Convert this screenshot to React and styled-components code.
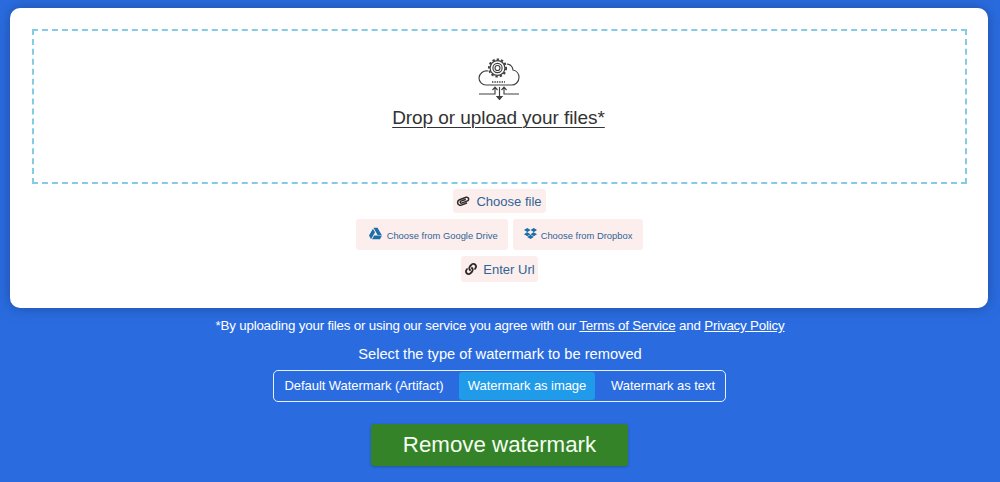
import styled, { createGlobalStyle } from "styled-components";
import { FaLink, FaPaperclip, FaGoogleDrive, FaDropbox } from "react-icons/fa";

const Global = createGlobalStyle`
  html, body {
    margin: 0;
    padding: 0;
    height: 482px;
    overflow: hidden;
    background: #2a6fe0;
    font-family: "Liberation Sans", Arial, sans-serif;
  }
`;

const Page = styled.div`
  width: 1000px;
  height: 482px;
  box-sizing: border-box;
  padding-top: 8px;
  display: flex;
  flex-direction: column;
  align-items: center;
  background: #2a6ce0;
`;

const Card = styled.div`
  box-sizing: border-box;
  width: 978px;
  height: 300px;
  margin-right: 2px;
  padding: 21px 21px 0 22px;
  background: #fff;
  border-radius: 10px;
  box-shadow: 0 0 14px rgba(20, 50, 110, 0.5);
  display: flex;
  flex-direction: column;
  align-items: center;
`;

const Dropzone = styled.div`
  box-sizing: border-box;
  width: 935px;
  height: 155px;
  flex: none;
  padding: 27px 2px 0 0;
  border: 2px dashed #86cbe6;
  display: flex;
  flex-direction: column;
  align-items: center;
  color: #333;
`;

const DropLabel = styled.span`
  margin-top: 6px;
  font-size: 19px;
  line-height: 24px;
  letter-spacing: -0.07px;
  color: #333;
  text-decoration: underline;
  text-underline-offset: 3px;
  text-decoration-thickness: 1px;
`;

const ButtonRow = styled.div`
  display: flex;
  justify-content: center;
  gap: 5px;
  margin-top: ${(p) => p.$top}px;
`;

const SourceButton = styled.div`
  height: ${(p) => p.$height}px;
  padding: ${(p) => (p.$small ? 2 : 0)}px ${(p) => p.$right}px 0 ${(p) => p.$left}px;
  box-sizing: border-box;
  display: flex;
  align-items: center;
  gap: ${(p) => p.$gap}px;
  background: #fdeeee;
  border-radius: 3px;
  color: #2f6494;
  font-size: ${(p) => (p.$small ? 9.4 : 13)}px;
  white-space: nowrap;
  svg {
    flex: none;
  }
`;

const DarkIcon = styled.span`
  display: flex;
  color: #2f2a2a;
  font-size: 12px;
  transform: rotate(${(p) => p.$turn || 0}deg);
`;

const BrandIcon = styled.span`
  display: flex;
  color: #1c6ea8;
  font-size: 13px;
  margin-top: -5px;
`;

const Terms = styled.p`
  margin: 9px 0 0;
  font-size: 13.33px;
  line-height: 18px;
  letter-spacing: -0.19px;
  color: #fff;
  a {
    color: #fff;
    text-decoration: underline;
  }
`;

const SelectLabel = styled.p`
  margin: 10px 0 0;
  font-size: 14.67px;
  line-height: 18px;
  color: #fff;
`;

const Segments = styled.div`
  box-sizing: border-box;
  width: 453px;
  height: 32px;
  margin: 7px 1px 0 0;
  padding: 1px 0;
  display: flex;
  align-items: stretch;
  border: 1px solid #e6f0ff;
  border-radius: 5px;
`;

const Segment = styled.div`
  box-sizing: border-box;
  display: flex;
  align-items: center;
  justify-content: center;
  width: ${(p) => p.$width}px;
  padding: ${(p) => p.$pad || "0 0 2px"};
  font-size: 13px;
  letter-spacing: -0.06px;
  color: #fff;
  white-space: nowrap;
  border-radius: 3px;
  background: ${(p) => (p.$active ? "#1f9bea" : "transparent")};
`;

const Submit = styled.button`
  width: 257px;
  height: 42px;
  margin: 22px 1px 0 0;
  border: 0;
  padding: 0;
  border-radius: 3px;
  background: #358329;
  color: #f4fff0;
  font-family: inherit;
  font-size: 22.3px;
  box-shadow: 0 1px 3px rgba(20, 50, 30, 0.35);
`;

function CloudIcon() {
  return (
    <svg width="42" height="42" viewBox="0 0 42 42" fill="none" stroke="#404040" strokeWidth="1.15">
      <path d="M10 13A7.500 7.500 0 0 0 1 20a7 7 0 0 0 7 7h25a7.500 7.500 0 0 0 8-7.500 7.500 7.500 0 0 0-6-7.500 7 7 0 0 0-6-6" />
      <circle cx="19.500" cy="10" r="8.600" strokeWidth="1.900" strokeDasharray="2.400 1.980" />
      <circle cx="19.500" cy="10" r="7.400" />
      <circle cx="19.500" cy="10" r="4.600" />
      <circle cx="19.500" cy="10" r="2.500" />
      <path d="M14 24h13" strokeWidth="1.300" strokeDasharray="1.400 1" />
      <path d="M1 36h16V29.500M14.500 32l2.500-2.800 2.500 2.800M41 36H26V29.500M23.500 32l2.500-2.800 2.500 2.800M21.500 29v12" />
      <path d="M19 38.500h5l-2.500 3z" fill="#404040" />
    </svg>
  );
}

export default function App() {
  return (
    <Page>
      <Global />
      <Card>
        <Dropzone>
          <CloudIcon />
          <DropLabel>Drop or upload your files*</DropLabel>
        </Dropzone>
        <ButtonRow $top={5}>
          <SourceButton $height={24} $left={4} $right={4} $gap={7}>
            <DarkIcon $turn={25}><FaPaperclip /></DarkIcon>
            Choose file
          </SourceButton>
        </ButtonRow>
        <ButtonRow $top={6}>
          <SourceButton $small $height={31} $left={13} $right={10} $gap={5}>
            <BrandIcon><FaGoogleDrive /></BrandIcon>
            Choose from Google Drive
          </SourceButton>
          <SourceButton $small $height={31} $left={11} $right={11} $gap={4}>
            <BrandIcon><FaDropbox /></BrandIcon>
            Choose from Dropbox
          </SourceButton>
        </ButtonRow>
        <ButtonRow $top={6}>
          <SourceButton $height={26} $left={4} $right={3} $gap={6}>
            <DarkIcon><FaLink /></DarkIcon>
            Enter Url
          </SourceButton>
        </ButtonRow>
      </Card>
      <Terms>
        *By uploading your files or using our service you agree with our <a href="#terms">Terms of Service</a> and <a href="#privacy">Privacy Policy</a>
      </Terms>
      <SelectLabel>Select the type of watermark to be removed</SelectLabel>
      <Segments>
        <Segment $width={185} $pad="0 5px 2px 0">Default Watermark (Artifact)</Segment>
        <Segment $width={136} $active>Watermark as image</Segment>
        <Segment $width={130} $pad="0 0 2px 6px">Watermark as text</Segment>
      </Segments>
      <Submit>Remove watermark</Submit>
    </Page>
  );
}
